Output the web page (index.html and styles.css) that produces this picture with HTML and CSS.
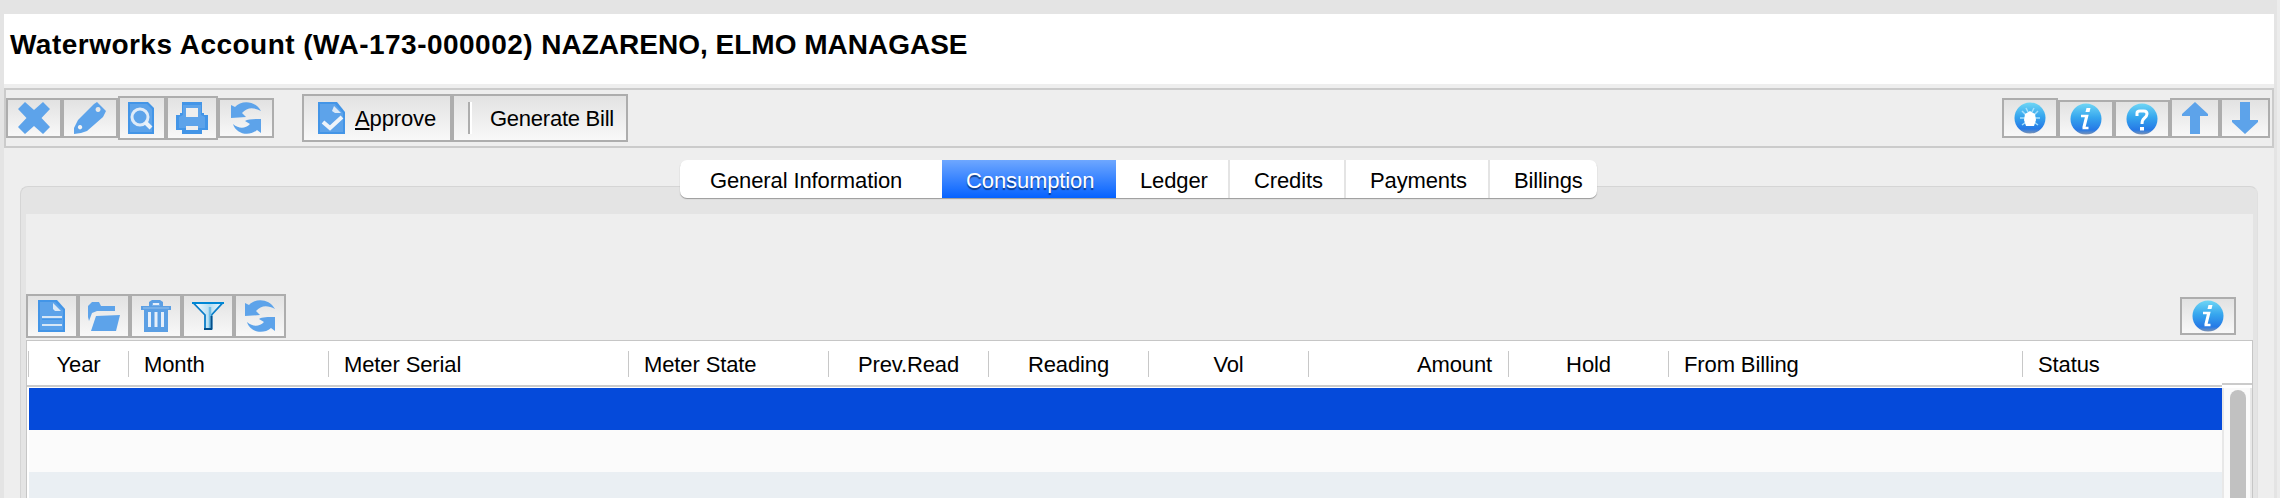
FILE: index.html
```html
<!DOCTYPE html>
<html lang="en">
<head>
<meta charset="utf-8">
<title>Waterworks Account</title>
<link rel="stylesheet" href="styles.css">
</head>
<body>
<svg class="defs" aria-hidden="true">
  <defs>
    <linearGradient id="orb" x1="0" y1="0" x2="0" y2="1"><stop offset="0" stop-color="#6fd6f5"/><stop offset=".45" stop-color="#36a6ee"/><stop offset=".85" stop-color="#2679e6"/><stop offset="1" stop-color="#7d94b4"/></linearGradient>
    <linearGradient id="glass" x1="0" y1="0" x2="1" y2="0"><stop offset="0" stop-color="#fff"/><stop offset=".55" stop-color="#b5def2"/><stop offset="1" stop-color="#eef9fe"/></linearGradient>
    <symbol id="close" viewBox="0 0 32 32"><path d="M7 0 16 8 25 0 32 7 23.500 16 32 25 25 32 16 24 7 32 0 25 8.500 16 0 7Z"/></symbol>
    <symbol id="pencil" viewBox="0 0 32 32"><path fill-rule="evenodd" d="M23 0 32 9 29 15 13 29 7 31 0 32V26L4 18 20 2ZM24 5a2.500 2.500 0 1 0 .1 0ZM6 23a2.200 2.200 0 1 0 .1 0Z"/></symbol>
    <symbol id="preview" viewBox="0 0 26 32"><path fill="#4395e7" d="M0 0H20L26 6V32H0Z"/><path d="M2 2H19L24 7V30H2Z"/><circle cx="12" cy="15" r="8" fill="#5da3ea" stroke="#dfebf8" stroke-width="3"/><path d="M17 20 23 26" stroke="#eaf2fa" stroke-width="4"/></symbol>
    <symbol id="print" viewBox="0 0 32 32"><path fill="#4395e7" d="M6 0H26V11H28V13H32V28H26V32H6V28H0V13H4V11H6Z"/><path d="M7 3H25V13L29 15V26H3V15L7 13Z"/><path fill="#eee" d="M10 6H22V15H10ZM10 24H22V28H10Z"/></symbol>
    <symbol id="refresh" viewBox="0 0 32 32"><path d="M1 3 5 5C11-2 25-2 31 9 24 5 17 5 12 11L16 15 1 16Z"/><path d="M31 17V31L27 28C19 35 6 32 3 22 9 27 15 27 20 22L15 19C18 17 24 17 31 17Z"/></symbol>
    <symbol id="check" viewBox="0 0 28 32"><path fill="#4395e7" d="M0 0H19L27 10V32H0Z"/><path d="M2 2H17L25 11V30H2Z"/><path fill="#dbe9f7" d="M16 4 23 11H17L14 9Z"/><path d="M5 20 12 26 24 15" fill="none" stroke="#eef4fa" stroke-width="4"/></symbol>
    <symbol id="bug" viewBox="0 0 32 32"><circle cx="16" cy="16" r="15.500" fill="url(#orb)"/><path d="M8 9 12 13M24 9 20 13M6 16H11M21 16H26M8 23 12 20M24 23 20 20M12 6 14 10M20 6 18 10" stroke="#a5dffb" stroke-width="1.500"/><path fill="#fff" d="M11 12 16 9 21 12 22 18 20 24H12L10 18Z"/></symbol>
    <symbol id="info" viewBox="0 0 32 32"><circle cx="16" cy="16" r="15.500" fill="url(#orb)"/><path fill="none" stroke="#fff" stroke-width="2.600" d="M11 13H17L14 25H18.500M16.500 13 13.500 25"/><path fill="#fff" d="M16.500 5H20.500L19.500 9H15.500Z"/></symbol>
    <symbol id="help" viewBox="0 0 32 32"><circle cx="16" cy="16" r="15.500" fill="url(#orb)"/><path fill="none" stroke="#fff" stroke-width="3" d="M11 13V10Q11 8 14 8H18Q21 8 21 11 21 13 18 15.500 16 17 16 21"/><path fill="#fff" d="M14 24H18V27.500H14Z"/></symbol>
    <symbol id="up" viewBox="0 0 26 32"><path d="M13 0 26 12V14H18V32H8V14H0V12Z"/></symbol>
    <symbol id="down" viewBox="0 0 26 32"><path d="M8 0H18V18H26V20L13 32 0 20V18H8Z"/></symbol>
    <symbol id="file" viewBox="0 0 28 32"><path fill="#4395e7" d="M0 0H19L27 9V32H0Z"/><path d="M2 2H17L25 10V30H2Z"/><path fill="#dbe9f7" d="M15 3 23 11H17L15 9Z"/><path fill="#d8e7f6" d="M4 16H24V18H4ZM4 24H24V26H4Z"/><path d="M4 19.500H24" stroke="#4395e7"/></symbol>
    <symbol id="folder" viewBox="0 0 32 32"><path d="M0 6 4 2H11L13 6H27V11H9L4 13 1 21 0 17Z"/><path d="M8 16 32 15 28 31H3Z"/></symbol>
    <symbol id="trash" viewBox="0 0 30 32"><path fill="#5b9fe4" d="M8 6V2L11 0H19L22 2V6H30V10H27V32H3V10H0V6Z"/><path fill="#78b0e8" d="M2 7H28V9H2ZM11 3H19V6H11Z"/><path fill="#e6effa" d="M7 12H10V27H7ZM13.500 12H16.500V27H13.500ZM20 12H23V27H20ZM12 3H18V5H12Z"/></symbol>
    <symbol id="filter" viewBox="0 0 32 32"><path fill="url(#glass)" stroke="#0a7dc8" stroke-width="1.800" d="M1.500 3H30.500L19.500 15V29H13V15Z"/><path d="M0 3H32" stroke="#0087d5" stroke-width="2"/><path d="M18 7V28" stroke="#6fbde6" stroke-width="2.500"/><path d="M12 29H20M19.500 16V29" stroke="#044f8a" stroke-width="1.800"/></symbol>
  </defs>
</svg>
<main class="window">
  <header class="title"><h1><span class="account">Waterworks Account (WA-173-000002) </span><span class="owner">NAZARENO, ELMO MANAGASE</span></h1></header>
  <section class="toolbar">
    <div class="group">
      <button class="btn w56"><svg class="i32"><use href="#close"/></svg></button>
      <button class="btn w56"><svg class="i32"><use href="#pencil"/></svg></button>
      <button class="btn w48 tall page"><svg class="i26"><use href="#preview"/></svg></button>
      <button class="btn w52 tall"><svg class="i32"><use href="#print"/></svg></button>
      <button class="btn w56"><svg class="i32"><use href="#refresh"/></svg></button>
    </div>
    <div class="group actions">
      <button class="btn action approve"><svg class="i28"><use href="#check"/></svg><span><u>A</u>pprove</span></button>
      <button class="btn action generate"><i class="rule"></i><span>Generate Bill</span></button>
    </div>
    <div class="group help">
      <button class="btn w56"><svg class="i32"><use href="#bug"/></svg></button>
      <button class="btn w56 short"><svg class="i32"><use href="#info"/></svg></button>
      <button class="btn w56 short"><svg class="i32"><use href="#help"/></svg></button>
      <button class="btn w50"><svg class="i26"><use href="#up"/></svg></button>
      <button class="btn w50"><svg class="i26"><use href="#down"/></svg></button>
    </div>
  </section>
  <section class="workspace">
    <nav class="tabs">
      <a class="tab general">General Information</a><a class="tab consumption active">Consumption</a><a class="tab ledger">Ledger</a><a class="tab credits">Credits</a><a class="tab payments">Payments</a><a class="tab billings">Billings</a>
    </nav>
    <div class="pane">
      <div class="content">
        <div class="listbar">
          <div class="group">
            <button class="btn w52 tall"><svg class="i28"><use href="#file"/></svg></button>
            <button class="btn w52 tall"><svg class="i32"><use href="#folder"/></svg></button>
            <button class="btn w52 tall"><svg class="i30"><use href="#trash"/></svg></button>
            <button class="btn w52 tall"><svg class="i32"><use href="#filter"/></svg></button>
            <button class="btn w52 tall"><svg class="i32"><use href="#refresh"/></svg></button>
          </div>
          <button class="btn w56 short"><svg class="i32"><use href="#info"/></svg></button>
        </div>
        <div class="table">
          <div class="head">
            <span class="mid">Year</span><span>Month</span><span>Meter Serial</span><span>Meter State</span><span class="mid">Prev.Read</span><span class="mid">Reading</span><span class="mid">Vol</span><span class="end">Amount</span><span class="mid">Hold</span><span>From Billing</span><span>Status</span>
          </div>
          <div class="body">
            <div class="rows"><div class="row selected"></div><div class="row"></div><div class="row alt"></div></div>
            <div class="side"><div class="corner"></div><div class="scroll"><div class="thumb"></div></div></div>
          </div>
        </div>
      </div>
    </div>
  </section>
</main>
</body>
</html>
```
FILE: styles.css
```css
* { box-sizing: border-box; }
body {
  margin: 0;
  height: 498px;
  overflow: hidden;
  padding: 14px 6px 0 4px;
  background: #e4e4e4;
  box-shadow: inset -3px 0 #ececec;
  color: #000;
  font: 22px/26px "Liberation Sans", Arial, sans-serif;
  letter-spacing: -.12px;
}
.defs { position: absolute; width: 0; height: 0; }
.window { height: 484px; background: #eee; overflow: hidden; }
.title { height: 70px; padding: 15px 6px; background: #fff; }
h1 { margin: 0; font-size: 28px; line-height: 32px; white-space: nowrap; }
.account { letter-spacing: .48px; }
.owner { letter-spacing: 0; }
.toolbar {
  display: flex;
  align-items: center;
  height: 60px;
  margin-top: 4px;
  border: 2px solid #cbcbcb;
}
.group { display: flex; align-items: center; }
.btn {
  display: flex;
  align-items: center;
  justify-content: center;
  height: 40px;
  margin: 0;
  padding: 0;
  border: 2px solid #adadad;
  background: linear-gradient(#e2e2e2, #f8f8f8);
  color: #000;
  font: inherit;
  letter-spacing: inherit;
}
.btn svg { display: block; height: 32px; fill: #5da3ea; }
.btn span { padding-top: 1px; }
.i26 { width: 26px; }
.i28 { width: 28px; }
.i30 { width: 30px; }
.i32 { width: 32px; }
.w48 { width: 48px; }
.w50 { width: 50px; }
.w52 { width: 52px; }
.w56 { width: 56px; }
.page { padding-right: 2px; }
.tall { height: 44px; }
.short { height: 38px; }
.actions { margin-left: 28px; }
.action { height: 48px; justify-content: flex-start; }
.approve { width: 150px; padding-left: 14px; gap: 9px; }
.generate { width: 176px; padding-left: 14px; gap: 18px; letter-spacing: -.25px; }
.rule { width: 4px; height: 32px; border-left: 2px solid #adadad; border-right: 2px solid #fff; }
u { text-decoration-thickness: 2px; text-underline-offset: 2px; }
.help { margin-left: auto; margin-right: 2px; align-items: flex-end; }
.workspace { display: grid; grid-template-rows: 26px 324px; padding: 12px 12px 0 16px; }
.tabs {
  z-index: 1;
  display: flex;
  justify-self: start;
  width: 917px;
  height: 38px;
  margin-left: 660px;
  overflow: hidden;
  border-radius: 7px;
  background: #fff;
  box-shadow: 0 1px 1px #999;
  line-height: 42px;
}
.tab { border-right: 2px solid #e4e4e4; white-space: nowrap; }
.general { width: 262px; padding-left: 30px; border: 0; }
.consumption { width: 174px; padding-left: 24px; border: 0; }
.active { background: linear-gradient(#6ea7ff, #0562ff); color: #fff; text-shadow: 0 2px 1px rgba(0, 35, 90, .7); }
.ledger { width: 114px; padding-left: 24px; }
.credits { width: 116px; padding-left: 24px; }
.payments { width: 144px; padding-left: 24px; }
.billings { width: 107px; padding-left: 24px; border: 0; }
.pane {
  width: 2238px;
  height: 324px;
  padding: 27px 4px 0 5px;
  border: 1px solid #d5d5d5;
  border-bottom: 0;
  border-right-color: #e0e0e0;
  border-radius: 8px 8px 0 0;
  background: #e4e4e4;
}
.content { height: 296px; padding-top: 80px; background: #eee; }
.listbar { display: flex; justify-content: space-between; align-items: center; padding-right: 17px; }
.table { height: 170px; width: 2227px; margin-top: 2px; border: 1px solid #c6c6c6; border-bottom: 0; background: #fff; }
.head {
  display: grid;
  grid-template-columns: 100px 200px 300px 200px 160px 160px 160px 200px 160px 354px 1fr;
  align-items: center;
  height: 46px;
  padding: 2px 30px 0 1px;
  border-bottom: 2px solid #cbcbcb;
}
.head span { height: 26px; padding-left: 15px; border-left: 1px solid #c8c8c8; line-height: 28px; }
.head .mid { padding: 0; text-align: center; }
.head .end { padding: 0 16px 0 0; text-align: right; }
.body { display: flex; padding: 1px 0 0 2px; }
.rows { width: 2193px; }
.row { height: 42px; background: #fbfbfb; }
.row.selected { background: #054ada; }
.row.alt { background: #eaeff3; }
.side { width: 30px; margin-top: -5px; background: #fff; }
.corner { height: 5px; border-top: 2px solid #cbcbcb; }
.scroll { height: 122px; padding: 2px 4px 0 6px; border: solid #e8e8e8; border-width: 0 2px; background: #fafafa; }
.thumb { width: 16px; height: 130px; border-radius: 8px 8px 0 0; background: #c1c1c1; }
```
